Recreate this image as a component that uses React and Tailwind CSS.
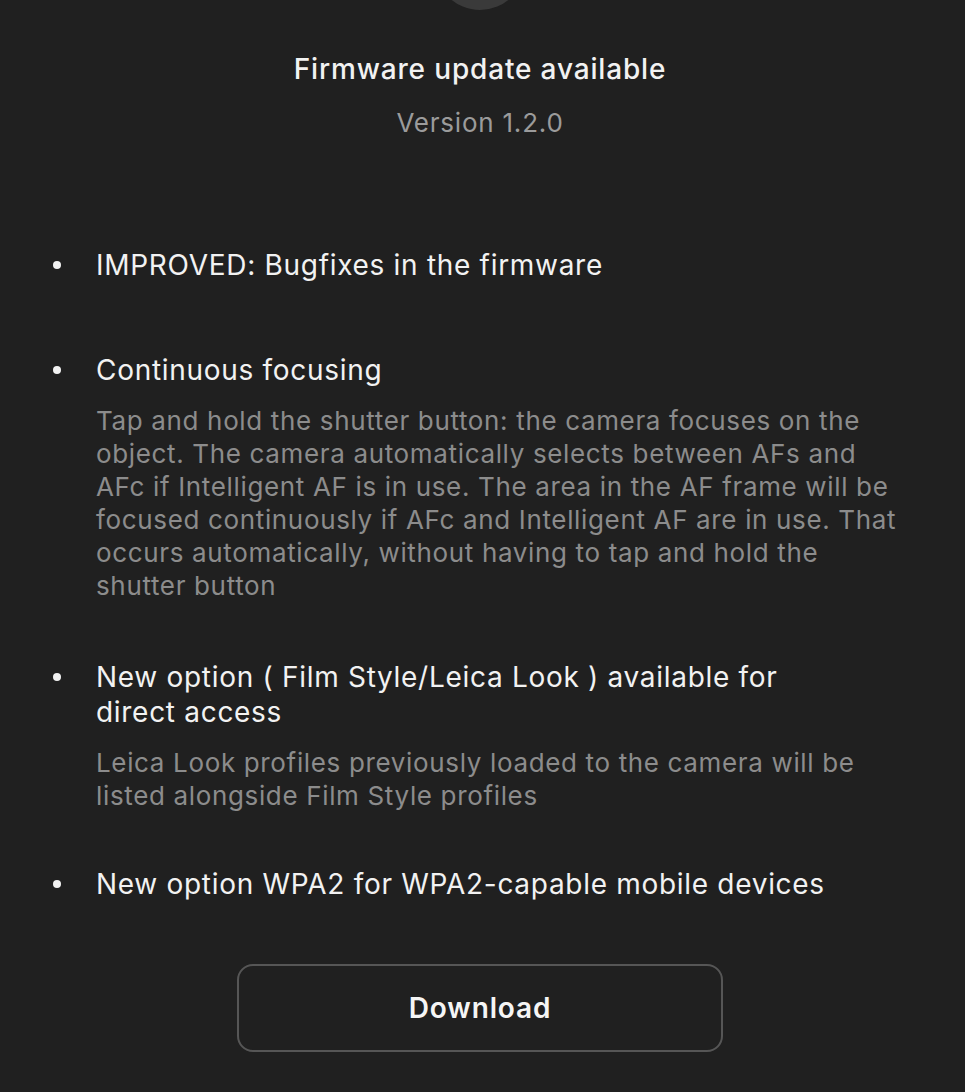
import React from 'react';

const items = [
  { title: 'IMPROVED: Bugfixes in the firmware' },
  {
    title: 'Continuous focusing',
    text: 'Tap and hold the shutter button: the camera focuses on the object. The camera automatically selects between AFs and AFc if Intelligent AF is in use. The area in the AF frame will be focused continuously if AFc and Intelligent AF are in use. That occurs automatically, without having to tap and hold the shutter button',
  },
  {
    title: (
      <>
        New option ( Film Style/Leica Look ) available for
        <br />
        direct access
      </>
    ),
    text: 'Leica Look profiles previously loaded to the camera will be listed alongside Film Style profiles',
  },
  { title: 'New option WPA2 for WPA2-capable mobile devices' },
];

const App = () => {
  return (
    <div
      className="min-h-screen w-full bg-[#202020] overflow-hidden"
      style={{ fontFamily: 'Inter, "Noto Sans", sans-serif' }}
    >
      <div className="pr-[5px]">
        <div className="mx-auto w-[90px] h-[90px] rounded-full bg-[#3a3a3a] -mt-[80px]"></div>
        <h1 className="mt-[42px] text-center text-[28px] leading-[35px] font-medium tracking-[0.03em] text-[#f2f2f2]">
          Firmware update available
        </h1>
        <p className="mt-[19px] text-center text-[26px] leading-[33px] tracking-[0.03em] text-[#9b9b9b]">Version 1.2.0</p>
      </div>

      <ul className="mt-[109px] pl-[53px] pr-[57px] flex flex-col">
        {items.map((item, i) => (
          <li key={i} className={`flex ${i === 1 ? 'mt-[70px]' : i === 2 ? 'mt-[58px]' : i === 3 ? 'mt-[55px]' : ''}`}>
            <div className="w-[43px] shrink-0 flex pt-[13px]">
              <span className="block w-[8px] h-[8px] rounded-full bg-[#f2f2f2]"></span>
            </div>
            <div className="flex-1">
              <div className="text-[28px] leading-[35px] tracking-[0.025em] text-[#f2f2f2]">{item.title}</div>
              {item.text && (
                <p className="mt-[16px] text-[26px] leading-[33px] tracking-[0.025em] text-[#8c8c8c]">{item.text}</p>
              )}
            </div>
          </li>
        ))}
      </ul>

      <div className="mt-[62px] pr-[5px] flex justify-center">
        <button className="w-[486px] h-[88px] rounded-[16px] border-2 border-[#565656] text-[28px] font-semibold tracking-[0.03em] text-[#f5f5f5]">
          Download
        </button>
      </div>
    </div>
  );
};

export default App;
